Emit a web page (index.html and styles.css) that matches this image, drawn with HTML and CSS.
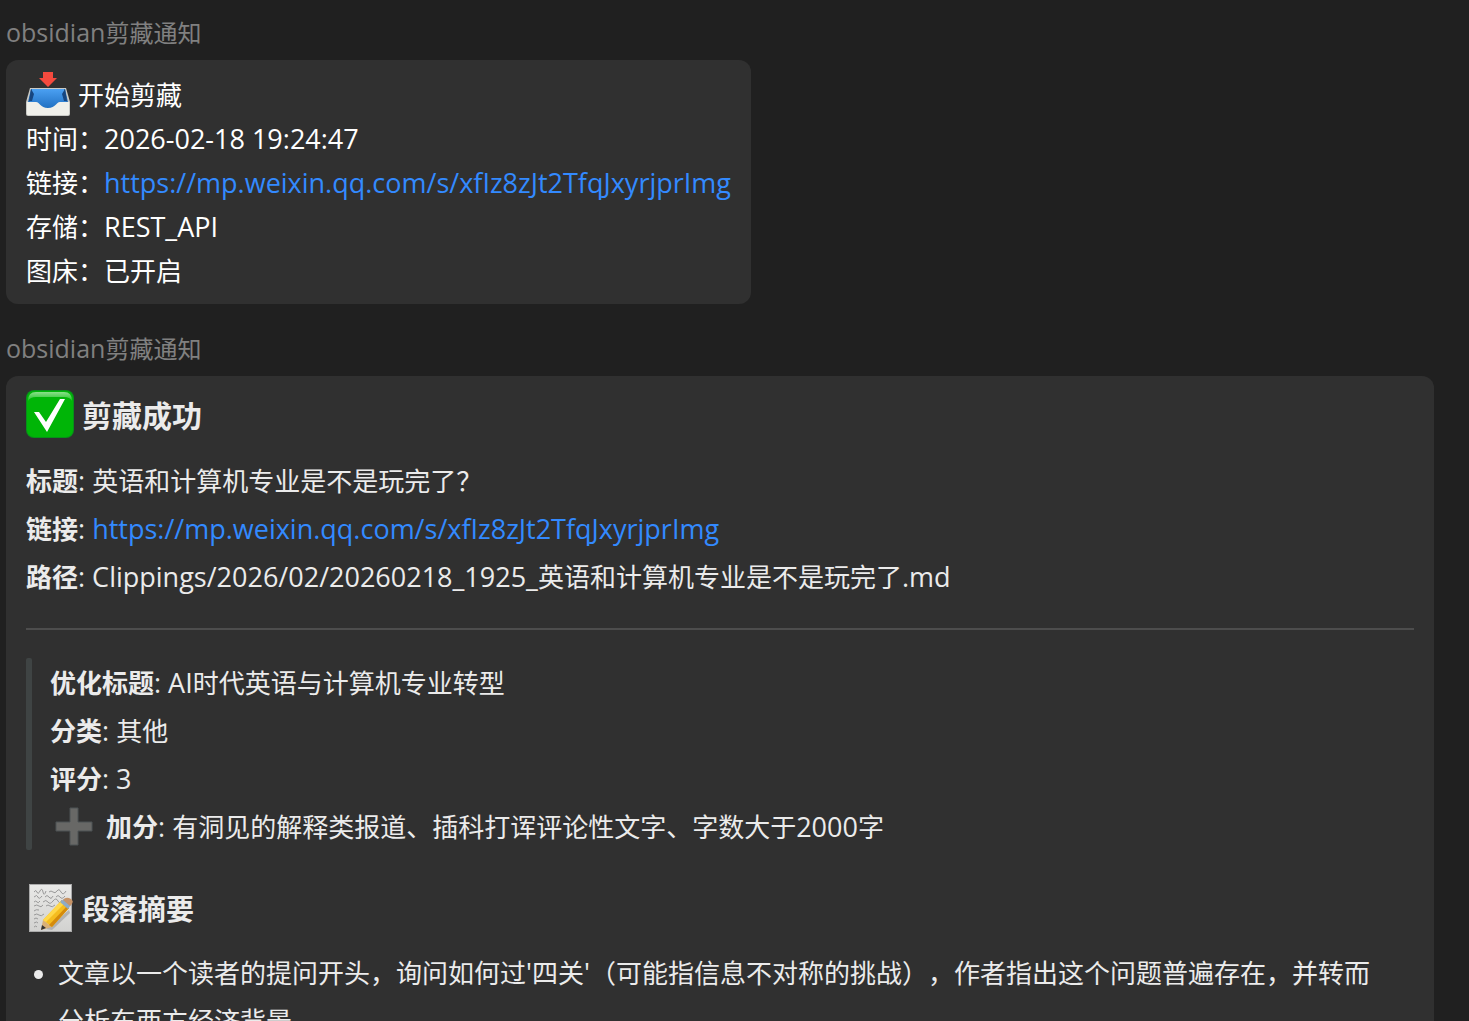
FILE: index.html
```html
<!DOCTYPE html>
<html lang="zh-CN">
<head>
    <meta charset="UTF-8">
    <meta name="viewport" content="width=device-width, initial-scale=1.0">
    <title>obsidian剪藏通知</title>
    <link rel="stylesheet" href="styles.css">
</head>
<body>

<main class="chat">
    <section class="message">
        <div class="sender"><span class="latin">obsidian</span>剪藏通知</div>
        <div class="bubble plain">
            <div class="line with-icon">
                <svg class="icon-inbox" viewBox="0 0 44 44" aria-hidden="true">
                    <defs>
                        <linearGradient id="trayBlue" x1="0" y1="0" x2="0" y2="1">
                            <stop offset="0" stop-color="#4ba0f2"/>
                            <stop offset="1" stop-color="#1f6fc0"/>
                        </linearGradient>
                    </defs>
                    <path d="M4 16H40L44 30V42Q44 44 42 44H2Q0 44 0 42V30Z" fill="#c9cac6"/>
                    <path d="M5 17H39L42 30H2Z" fill="#2a6fb8"/>
                    <path d="M6 17H38L40 30L30 37H14L4 30Z" fill="url(#trayBlue)"/>
                    <path d="M5 17L3 29H6L8 22ZM39 17L41 29H38L36 22Z" fill="#174680"/>
                    <path d="M1 30H10C14 30 14 36 22 36S30 30 34 30H43V42Q43 43 42 43H2Q1 43 1 42Z" fill="#f0f0ea"/>
                    <path d="M17 0H27V6H31L22 15L13 6H17Z" fill="#f44a3e"/>
                </svg>
                <span>开始剪藏</span>
            </div>
            <div class="line">时间：<span class="latin">2026-02-18 19:24:47</span></div>
            <div class="line">链接：<a class="latin" href="https://mp.weixin.qq.com/s/xfIz8zJt2TfqJxyrjprImg">https://mp.weixin.qq.com/s/xfIz8zJt2TfqJxyrjprImg</a></div>
            <div class="line">存储：<span class="latin">REST_API</span></div>
            <div class="line">图床：已开启</div>
        </div>
    </section>

    <section class="message">
        <div class="sender"><span class="latin">obsidian</span>剪藏通知</div>
        <article class="bubble card">
            <h1 class="title">
                <svg class="icon" viewBox="0 0 48 48" aria-hidden="true">
                    <defs>
                        <linearGradient id="checkGloss" x1="0" y1="0" x2="0" y2="1">
                            <stop offset="0" stop-color="#8ae08a"/>
                            <stop offset="1" stop-color="#20c026"/>
                        </linearGradient>
                    </defs>
                    <rect width="48" height="48" rx="8" fill="#07911a"/>
                    <rect x="1" y="1" width="46" height="46" rx="7" fill="#00b507"/>
                    <path d="M2 11Q2 2 10 2H38Q46 2 46 11Q44 7 38 7H10Q4 7 2 11Z" fill="url(#checkGloss)"/>
                    <path d="M8 22H13L20 32L34 9H39L21 42Z" fill="#fff"/>
                </svg>
                <span>剪藏成功</span>
            </h1>
            <p><strong>标题</strong><span class="latin">: </span>英语和计算机专业是不是玩完了？</p>
            <p><strong>链接</strong><span class="latin">: <a href="https://mp.weixin.qq.com/s/xfIz8zJt2TfqJxyrjprImg">https://mp.weixin.qq.com/s/xfIz8zJt2TfqJxyrjprImg</a></span></p>
            <p><strong>路径</strong><span class="latin">: Clippings/2026/02/20260218_1925_</span>英语和计算机专业是不是玩完了<span class="latin">.md</span></p>

            <hr>

            <blockquote>
                <p><strong>优化标题</strong><span class="latin">: AI</span>时代英语与计算机专业转型</p>
                <p><strong>分类</strong><span class="latin">: </span>其他</p>
                <p><strong>评分</strong><span class="latin">: 3</span></p>
                <p class="with-icon">
                    <svg class="icon" viewBox="0 0 48 48" aria-hidden="true">
                        <path d="M20 6H28V20H42V29H28V43H20V29H6V20H20Z" fill="#686866" stroke="#4d5355"/>
                    </svg>
                    <span><strong>加分</strong><span class="latin">: </span>有洞见的解释类报道、插科打诨评论性文字、字数大于<span class="latin">2000</span>字</span>
                </p>
            </blockquote>

            <h2 class="title">
                <svg class="icon" viewBox="0 0 48 48" aria-hidden="true">
                    <defs>
                        <linearGradient id="paper" x1="0" y1="0" x2="0" y2="1">
                            <stop offset="0" stop-color="#e9e9e7"/>
                            <stop offset="1" stop-color="#d2d2d0"/>
                        </linearGradient>
                    </defs>
                    <rect x="3" y="0" width="43" height="48" fill="#aaa"/>
                    <rect x="4" y="1" width="41" height="46" fill="url(#paper)"/>
                    <g fill="none" stroke="#999" stroke-width="1">
                        <path d="M8 8q2-3 3 0t3-1 3 1 3-1M23 8q2-2 4 0t4-1 4 1 5-1"/>
                        <path d="M8 13q3-3 4 0t4-1M19 13q2-3 4 0t4-1M30 13q2-3 4 0t5-1"/>
                        <path d="M8 18q2-2 3 0t3-1M17 18q3-3 5 0t5-1 5 0 4-1"/>
                        <path d="M8 22q3-2 5 0t4-1M20 22q2-2 4 0t5-1"/>
                        <path d="M8 27q2-2 5-1M8 31q3-2 5 0t5-1M8 35q2-2 4 0"/>
                        <path d="M8 39q3-2 4 0M8 43q2-2 3 0"/>
                    </g>
                    <path d="M20 45L43 26L44 29L26 46Z" fill="#999" opacity=".6"/>
                    <path d="M15 46L17 36L26 43Z" fill="#d9b078"/>
                    <path d="M15 46L16 41L20 44Z" fill="#333"/>
                    <path d="M17 36L35 17L43 24L26 43Z" fill="#f5bd20"/>
                    <path d="M17 36L35 17L38 20L20 38Z" fill="#ffd84a"/>
                    <path d="M23 41L41 22L43 24L26 43Z" fill="#d58b0c"/>
                    <path d="M34 18L38 15L45 21L42 25Z" fill="#8eabc5"/>
                    <path d="M37 16Q40 12 45 15Q49 18 44 22Z" fill="#c79468"/>
                </svg>
                <span>段落摘要</span>
            </h2>
            <ul>
                <li>文章以一个读者的提问开头，询问如何过<span class="latin">'</span>四关<span class="latin">'</span>（可能指信息不对称的挑战），作者指出这个问题普遍存在，并转而分析东西方经济背景</li>
            </ul>
        </article>
    </section>
</main>

</body>
</html>
```
FILE: styles.css
```css
* { box-sizing: border-box; }
body {
    margin: 0;
    background-color: #202020;
    color: #fff;
    font-family: "Noto Sans CJK SC", sans-serif;
    font-size: 26px;
    line-height: 48px;
    text-spacing-trim: space-all;
}
.latin {
    font-family: "Open Sans", "Noto Sans CJK SC", sans-serif;
    font-size: 27px;
    line-height: 1;
}
.chat {
    height: 100vh;
    overflow: hidden;
    padding: 16px 35px 0 6px;
}
.message { margin-bottom: 28px; }
.sender {
    color: #808080;
    font-size: 24px;
    line-height: 32px;
    margin-bottom: 12px;
}
.sender .latin { font-size: 25px; }
.bubble {
    background-color: #303030;
    border-radius: 12px;
}
.plain {
    width: fit-content;
    max-width: 100%;
    padding: 12px 20px;
    line-height: 44px;
}
.card {
    padding: 14px 20px;
    color: #ebebeb;
}
.with-icon, .title { display: flex; align-items: center; gap: 8px; }
.icon { width: 48px; height: 48px; flex: none; }
.icon-inbox { width: 44px; height: 44px; flex: none; }
a { color: #338aff; text-decoration: none; }
a:hover { text-decoration: underline; }
p { margin: 0; }
.title { margin: 0 0 18px; font-size: 30px; font-weight: bold; }
h2.title { margin: 34px 0 16px; font-size: 28px; }
hr {
    height: 2px;
    margin: 28px 0;
    border: none;
    background-color: #4d4d4d;
}
blockquote {
    position: relative;
    margin: 0;
    padding-left: 24px;
}
/* rounded quote bar */
blockquote::before {
    content: "";
    position: absolute;
    left: 0;
    top: 0;
    bottom: 0;
    width: 6px;
    border-radius: 2px;
    background-color: #3f4444;
}
ul {
    margin: 0;
    padding: 0 20px 0 32px;
}
li::marker { font-size: 22px; }
```
